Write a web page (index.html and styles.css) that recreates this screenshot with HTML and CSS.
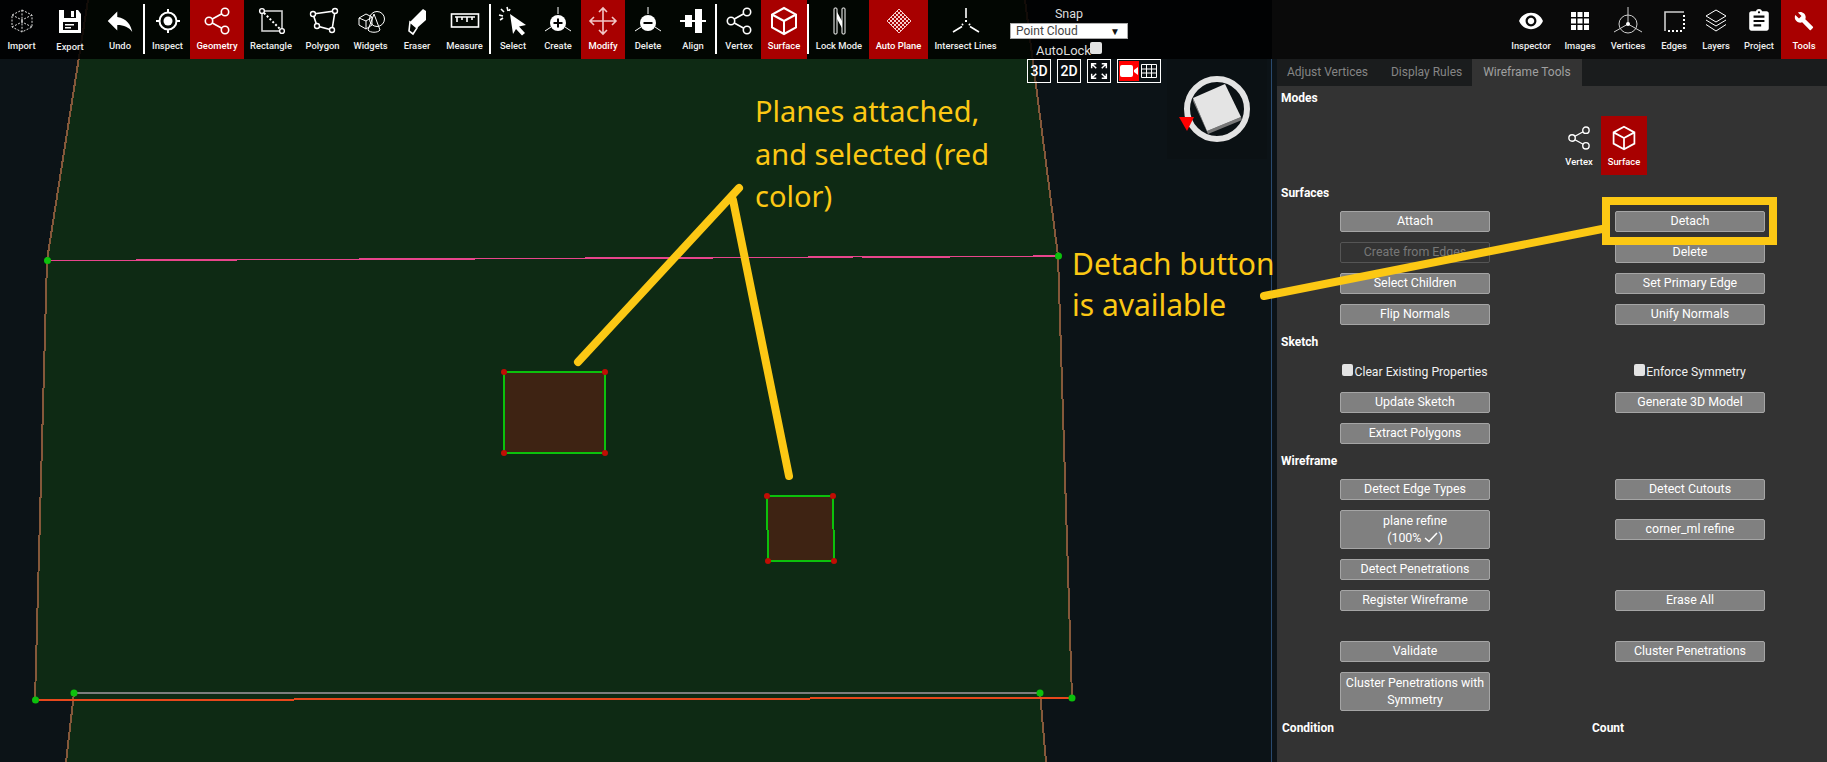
FILE: index.html
```html
<!DOCTYPE html>
<html lang="en">
<head>
<meta charset="utf-8">
<title>Wireframe Tools</title>
<link rel="stylesheet" href="styles.css">
</head>
<body>
<div class="app">
  <svg class="scene" viewBox="0 0 1827 762" aria-hidden="true">
    <polygon class="ground" points="88,0 47,260 35,700 73,700 66,762 1046,762 1041,698 1072,698 1058,256 1025,0"/>
    <polyline class="edge" points="88,0 47,260 35,700"/>
    <polyline class="edge" points="1025,0 1058,256 1072,698"/>
    <polyline class="edge" points="74,693 66,762"/>
    <polyline class="edge" points="1040,693 1046,762"/>
    <line class="pink" x1="47" y1="260.500" x2="1058" y2="256"/>
    <line class="pink-thick" x1="148" y1="260" x2="237" y2="260"/>
    <line class="pink-thick" x1="386" y1="259" x2="475" y2="259"/>
    <line class="pink-thick" x1="624" y1="258" x2="713" y2="258"/>
    <line class="pink-thick" x1="862" y1="257" x2="950" y2="257"/>
    <line class="grey" x1="74" y1="693" x2="1040" y2="693"/>
    <line class="orange" x1="36" y1="700" x2="1072" y2="698"/>
    <polygon class="plane" points="504,372 605,372 605,453 504,453"/>
    <polygon class="plane" points="767,496 833,496 834,561 768,561"/>
    <g class="red-dots">
      <circle cx="504" cy="372" r="3"/><circle cx="605" cy="372" r="3"/><circle cx="605" cy="453" r="3"/><circle cx="504" cy="453" r="3"/>
      <circle cx="767" cy="496" r="3"/><circle cx="833" cy="496" r="3"/><circle cx="834" cy="561" r="3"/><circle cx="768" cy="561" r="3"/>
    </g>
    <g class="green-dots">
      <circle cx="47.500" cy="260.500" r="3.500"/><circle cx="1058.500" cy="256" r="3.500"/><circle cx="35.500" cy="700" r="3.500"/>
      <circle cx="74" cy="693" r="3.500"/><circle cx="1040" cy="693" r="3.500"/><circle cx="1072" cy="698" r="3.500"/>
    </g>
  </svg>

  <header class="toolbar">
    <div class="tool-strip">
      <div class="tool"><svg class="ico" viewBox="0 0 30 30"><path class="dash" d="M15 4 25 9V21L15 26 5 21V9ZM5 9 15 14 25 9M15 14V26M5 21 15 16 25 21M15 4V16"/></svg><span>Import</span></div>
      <div class="tool"><svg class="ico" viewBox="0 0 30 30"><path class="fill" d="M4 4H23L26 8V27H4Z"/><rect class="cut" x="9" y="4" width="12" height="8"/><rect class="fill" x="16" y="5" width="3" height="6"/><rect class="cut" x="8" y="16" width="15" height="8"/><rect class="fill" x="10" y="18" width="9" height="1.500"/><rect class="fill" x="10" y="21" width="6" height="1.500"/></svg><span class="low">Export</span></div>
      <div class="tool"><svg class="ico" viewBox="1 1 22 22"><path class="fill" d="M10 9V5l-7 7 7 7v-4.100c5 0 8.500 1.600 11 5.100-1-5-4-10-11-11z"/></svg><span>Undo</span></div>
      <i class="sep"></i>
      <div class="tool"><svg class="ico" viewBox="0 0 30 30"><circle class="st2" cx="15" cy="15" r="8.500"/><circle class="fill" cx="15" cy="15" r="4.500"/><path class="st2" d="M15 3V7M15 23V27M3 15H7M23 15H27"/></svg><span>Inspect</span></div>
      <div class="tool on"><svg class="ico" viewBox="0 0 30 30"><path class="st15" d="M10.300 13 19.800 7.800M10.300 17 19.800 22.200"/><circle class="st15" cx="23" cy="6" r="3.700"/><circle class="st15" cx="7" cy="15" r="3.700"/><circle class="st15" cx="23" cy="24" r="3.700"/></svg><span>Geometry</span></div>
      <div class="tool"><svg class="ico" viewBox="0 0 30 30"><rect class="st15 soft" x="6" y="5" width="20" height="20"/><path class="dots" d="M8 7 24 23"/><circle class="node" cx="6" cy="5" r="2.400"/><circle class="node" cx="26" cy="25" r="2.400"/></svg><span>Rectangle</span></div>
      <div class="tool"><svg class="ico" viewBox="0 0 30 30"><path class="st15" d="M5 8 27 5 24 24 9 20Z"/><circle class="node" cx="5" cy="8" r="2.500"/><circle class="node" cx="27" cy="5" r="2.500"/><circle class="node" cx="24" cy="24" r="2.500"/><circle class="node" cx="9" cy="20" r="2.500"/></svg><span>Polygon</span></div>
      <div class="tool"><svg class="ico" viewBox="0 0 30 30"><circle class="st1" cx="21" cy="13" r="7.500"/><path class="st1" d="M18 8 12 24C14 27 22 27 24 24Z"/><path class="st1" d="M3 12 10 8 16 11V19L10 23 3 19ZM3 12 10 15 16 11M10 15V23"/></svg><span>Widgets</span></div>
      <div class="tool"><svg class="ico" viewBox="0 0 30 30"><path class="fill" d="M8 16 21 3 24 5V14L15 22Z"/><path class="st15" d="M8 16 15 22 11 28 7 25Z"/></svg><span>Eraser</span></div>
      <div class="tool"><svg class="ico" viewBox="0 0 30 30"><rect class="st15" x="1.500" y="8" width="27" height="13"/><path class="st15" d="M5 11H25M7 11V16M12 11V14M17 11V16M22 11V14"/></svg><span>Measure</span></div>
      <i class="sep"></i>
      <div class="tool"><svg class="ico" viewBox="0 0 30 30"><path class="fill" d="M12 8 28 19 21 20.500 27 27 24 29.500 18 23 15 28Z"/><path class="st15" d="M9 1 10 5M1 9 5 10M3 3 6 6M12 3 11 5M2 14 5 12"/></svg><span>Select</span></div>
      <div class="tool"><svg class="ico" viewBox="0 0 30 30"><path class="st1" d="M15 1V8M2 25 8 21M28 25 22 21"/><circle class="fill" cx="15" cy="17" r="8"/><path class="inv" d="M15 12.500V21.500M10.500 17H19.500"/></svg><span>Create</span></div>
      <div class="tool on"><svg class="ico" viewBox="0 0 30 30"><path class="st15 pale" d="M15 2V28M2 15H28M11 6 15 2 19 6M11 24 15 28 19 24M6 11 2 15 6 19M24 11 28 15 24 19"/></svg><span>Modify</span></div>
      <div class="tool"><svg class="ico" viewBox="0 0 30 30"><path class="st1" d="M15 1V8M2 25 8 21M28 25 22 21"/><circle class="fill" cx="15" cy="17" r="8"/><path class="inv" d="M10.500 17H19.500"/></svg><span>Delete</span></div>
      <div class="tool"><svg class="ico" viewBox="0 0 30 30"><path class="st2" d="M2 15H28"/><rect class="fill" x="7" y="9" width="7" height="12"/><rect class="fill" x="17" y="3" width="7" height="24"/></svg><span>Align</span></div>
      <i class="sep"></i>
      <div class="tool"><svg class="ico" viewBox="0 0 30 30"><path class="st15" d="M10.300 13 19.800 7.800M10.300 17 19.800 22.200"/><circle class="st15" cx="23" cy="6" r="3.700"/><circle class="st15" cx="7" cy="15" r="3.700"/><circle class="st15" cx="23" cy="24" r="3.700"/></svg><span>Vertex</span></div>
      <div class="tool on"><svg class="ico" viewBox="0 0 30 30"><path class="st2" d="M15 2 27 8.500V21.500L15 28 3 21.500V8.500ZM3 8.500 15 15 27 8.500M15 15V28"/></svg><span>Surface</span></div>
      <i class="sep"></i>
      <div class="tool"><svg class="ico" viewBox="0 0 30 30"><rect class="st1" x="10" y="2" width="3" height="26" rx="1"/><rect class="st1" x="18" y="2" width="3" height="26" rx="1"/><path class="fill" d="M13 6 18 15V22L13 13Z"/></svg><span>Lock Mode</span></div>
      <div class="tool on"><svg class="ico" viewBox="0 0 30 30"><path class="mesh" d="M15 3 27 15 15 27 3 15ZM11 7 23 19M7 11 19 23M19 7 7 19M23 11 11 23M13 5 25 17M9 9 21 21M5 13 17 25M17 5 5 17M21 9 9 21M25 13 13 25"/></svg><span>Auto Plane</span></div>
      <div class="tool"><svg class="ico" viewBox="0 0 30 30"><path class="st15" d="M15 2V12M2 26 11 20.500M28 26 19 20.500"/><path class="dots" d="M15 14V18M12 18 11 19M18 18 19 19"/></svg><span>Intersect Lines</span></div>
    </div>
    <div class="snap">
      <div class="snap-title">Snap</div>
      <div class="select"><span>Point Cloud</span><b>▼</b></div>
      <label class="autolock">AutoLock<input type="checkbox"></label>
    </div>
    <div class="toolbar-right">
      <div class="tool"><svg class="ico" viewBox="-1.800 -1.800 27.600 27.600"><path class="fill" d="M12 4.500C7 4.500 2.730 7.610 1 12c1.730 4.390 6 7.500 11 7.500s9.270-3.110 11-7.500c-1.730-4.390-6-7.500-11-7.500zM12 17c-2.760 0-5-2.240-5-5s2.240-5 5-5 5 2.240 5 5-2.240 5-5 5zm0-8c-1.660 0-3 1.340-3 3s1.340 3 3 3 3-1.340 3-3-1.340-3-3-3z"/></svg><span>Inspector</span></div>
      <div class="tool"><svg class="ico" viewBox="0 0 30 30"><path class="fill" d="M6 6h5v5H6zM12.500 6h5v5h-5zM19 6h5v5h-5zM6 12.500h5v5H6zM12.500 12.500h5v5h-5zM19 12.500h5v5h-5zM6 19h5v5H6zM12.500 19h5v5h-5zM19 19h5v5h-5z"/></svg><span>Images</span></div>
      <div class="tool"><svg class="ico" viewBox="0 0 30 30"><circle class="st1 soft" cx="15" cy="18" r="9"/><path class="st1 soft" d="M15 1V18L1 26M15 18 29 26"/><circle class="fill" cx="15" cy="18" r="2"/></svg><span>Vertices</span></div>
      <div class="tool"><svg class="ico" viewBox="0 0 30 30"><path class="st15 soft" d="M6 25V6H25"/><path class="dots" d="M25 9V25M9 25H25"/></svg><span>Edges</span></div>
      <div class="tool"><svg class="ico" viewBox="0 0 30 30"><path class="st1" d="M15 4 25 10 15 16 5 10ZM5 14 15 20 25 14M5 18.500 15 25 25 18.500"/></svg><span>Layers</span></div>
      <div class="tool"><svg class="ico" viewBox="-1.800 -1.800 27.600 27.600"><path class="fill" d="M19 3h-4.180C14.400 1.840 13.300 1 12 1c-1.300 0-2.400.84-2.820 2H5c-1.100 0-2 .9-2 2v14c0 1.100.9 2 2 2h14c1.100 0 2-.9 2-2V5c0-1.100-.9-2-2-2zm-7 0c.55 0 1 .45 1 1s-.45 1-1 1-1-.45-1-1 .45-1 1-1zm2 14H7v-2h7v2zm3-4H7v-2h10v2zm0-4H7V7h10v2z"/></svg><span>Project</span></div>
      <div class="tool on"><svg class="ico" viewBox="-6 -6 36 36"><path class="fill" d="M22.700 19l-9.100-9.100c.9-2.300.4-5-1.500-6.900-2-2-5-2.400-7.400-1.300L9 6 6 9 1.600 4.700C.4 7.100.9 10.100 2.900 12.100c1.900 1.900 4.600 2.400 6.900 1.500l9.100 9.100c.4.4 1 .4 1.400 0l2.300-2.300c.5-.4.5-1.100.1-1.400z"/></svg><span>Tools</span></div>
    </div>
  </header>

  <div class="workspace">
    <div class="viewport">
      <div class="view-btn">3D</div>
      <div class="view-btn">2D</div>
      <div class="view-btn"><svg viewBox="0 0 24 24" class="view-ico"><path class="st15" d="M4 9V4H9M4 4 9 9M15 4H20V9M20 4 15 9M4 15V20H9M4 20 9 15M20 15V20H15M20 20 15 15"/></svg></div>
      <div class="view-pair">
        <span class="cam"><svg viewBox="0 0 20 20"><rect class="fill" x="1" y="4" width="13" height="12" rx="2"/><path class="fill" d="M15 9 19 6V14L15 11Z"/></svg></span>
        <span class="grid-ico"><svg viewBox="0 0 20 20"><path class="st1" d="M2.500 3.500H17.500V16.500H2.500ZM7.500 3.500V16.500M12.500 3.500V16.500M2.500 8H17.500M2.500 12H17.500"/></svg></span>
      </div>
      <div class="gizmo">
        <svg viewBox="0 0 100 100">
          <circle class="ring" cx="50" cy="50" r="30"/>
          <polygon class="cube-side" points="26,39 40,72 74,58 75,61 41,75 26,42"/>
          <polygon class="cube-top" points="26,39 58,25 74,58 40,72"/>
          <polygon class="cube-arrow" points="12,58 27,58 20,72"/>
        </svg>
      </div>
    </div>

    <aside class="panel">
      <nav class="tabs">
        <div class="tab">Adjust Vertices</div>
        <div class="tab">Display Rules</div>
        <div class="tab active">Wireframe Tools</div>
      </nav>
      <div class="panel-body">
        <h3 class="section">Modes</h3>
        <div class="modes">
          <div class="mode"><svg class="mode-ico" viewBox="0 0 30 30"><path class="st15" d="M10.300 13 19.800 7.800M10.300 17 19.800 22.200"/><circle class="st15" cx="23" cy="6" r="3.700"/><circle class="st15" cx="7" cy="15" r="3.700"/><circle class="st15" cx="23" cy="24" r="3.700"/></svg><span>Vertex</span></div>
          <div class="mode on"><svg class="mode-ico" viewBox="0 0 30 30"><path class="st2" d="M15 2 27 8.500V21.500L15 28 3 21.500V8.500ZM3 8.500 15 15 27 8.500M15 15V28"/></svg><span>Surface</span></div>
        </div>

        <h3 class="section gap-s">Surfaces</h3>
        <div class="actions">
          <button>Attach</button><button>Detach</button>
          <button class="disabled">Create from Edges</button><button>Delete</button>
          <button>Select Children</button><button>Set Primary Edge</button>
          <button>Flip Normals</button><button>Unify Normals</button>
        </div>

        <h3 class="section gap-k">Sketch</h3>
        <div class="actions tight">
          <label class="check"><input type="checkbox"><span>Clear Existing Properties</span></label>
          <label class="check"><input type="checkbox"><span>Enforce Symmetry</span></label>
          <button>Update Sketch</button><button>Generate 3D Model</button>
          <button>Extract Polygons</button><span></span>
        </div>

        <h3 class="section gap-w">Wireframe</h3>
        <div class="actions">
          <button>Detect Edge Types</button><button>Detect Cutouts</button>
          <button class="tall">plane refine<br>(100% <svg class="tick" viewBox="0 0 14 11"><path d="M1 6 5 9.500 13 1"/></svg>)</button><button>corner_ml refine</button>
          <button>Detect Penetrations</button><span></span>
          <button>Register Wireframe</button><button>Erase All</button>
          <i class="spacer"></i><i class="spacer"></i>
          <button>Validate</button><button>Cluster Penetrations</button>
          <button class="tall">Cluster Penetrations with Symmetry</button><span></span>
        </div>

        <div class="counts">
          <h3 class="section">Condition</h3>
          <h3 class="section">Count</h3>
        </div>
      </div>
    </aside>
  </div>

  <svg class="callouts" viewBox="0 0 1827 762" aria-hidden="true">
    <path d="M578 362 739 188M733 200 789 476M1264 296 1602 229"/>
    <rect x="1606" y="201" width="167" height="40"/>
  </svg>
  <p class="note note-planes">Planes attached,<br>and selected (red<br>color)</p>
  <p class="note note-detach">Detach button<br>is available</p>
</div>
</body>
</html>
```
FILE: styles.css
```css
* { box-sizing: border-box; }
html, body { margin: 0; height: 100%; background: #0c1317; }
body { font-family: Roboto, "Liberation Sans", sans-serif; color: #fff; overflow: hidden; }

.app { position: relative; width: 1827px; height: 762px; overflow: hidden; display: flex; flex-direction: column; }

/* 3D scene canvas */
.scene { position: absolute; inset: 0; width: 1827px; height: 762px; }
.ground { fill: #0e2a14; }
.edge { fill: none; stroke: #85583a; stroke-width: 2; shape-rendering: crispEdges; }
.pink { stroke: #e8458c; stroke-width: 1.2; shape-rendering: crispEdges; }
.pink-thick { stroke: #e8458c; stroke-width: 2; shape-rendering: crispEdges; }
.grey { stroke: #7d7d7d; stroke-width: 2; shape-rendering: crispEdges; }
.orange { stroke: #e8481c; stroke-width: 2; shape-rendering: crispEdges; }
.plane { fill: #3e2313; stroke: #0cc00c; stroke-width: 2; shape-rendering: crispEdges; }
.red-dots circle { fill: #c00d04; }
.green-dots circle { fill: #0cc00c; }

/* toolbar */
.toolbar { position: relative; z-index: 2; height: 59px; display: flex; flex: none; background: rgba(0, 0, 0, .86); }
.tool-strip { flex: none; display: grid; grid-template-columns: 43px 54px 46px 2px 45px 54px 54px 49px 47px 46px 49px 2px 44px 46px 44px 46px 44px 2px 44px 46px 2px 60px 59px 75px; }
.tool { min-width: 0; height: 59px; padding-top: 6px; display: flex; flex-direction: column; align-items: center; font-size: 9.4px; font-weight: 500; line-height: 12px; color: #eee; white-space: nowrap; }
.tool.on { background: #a80000; color: #fff; }
.low { margin-top: 1px; }
.ico { width: 30px; height: 30px; margin-bottom: 4px; flex: none; overflow: visible; }
.sep { width: 2px; height: 50px; margin-top: 4px; background: #fff; }
.toolbar-right { margin-left: auto; width: 555px; display: grid; grid-template-columns: 52px 46px 50px 42px 42px 44px 46px; justify-content: end; background: #0a0a0a; }

.fill { fill: #fff; }
.cut { fill: #060606; }
.st1, .st15, .st2, .dash, .dots, .inv, .mesh { fill: none; stroke: #fff; }
.st1 { stroke-width: 1; }
.st15 { stroke-width: 1.6; }
.st2 { stroke-width: 2; }
.soft { stroke: #cfcfcf; }
.pale { stroke: #f2c6c6; }
.dash { stroke-width: 1; stroke-dasharray: 2 1.4; stroke: #ddd; }
.dots { stroke-width: 2; stroke-dasharray: 2 2; }
.inv { stroke: #000; stroke-width: 2; }
.mesh { stroke-width: 1; stroke: #f6cccc; }
.node { fill: #060606; stroke: #fff; stroke-width: 1.4; }

.snap { flex: none; width: 118px; margin-left: 7px; padding-top: 6px; display: flex; flex-direction: column; align-items: center; font-size: 13px; color: #ddd; }
.snap-title { line-height: 16px; font-size: 12.5px; }
.select { width: 118px; height: 18px; margin-top: 1px; padding: 0 7px 0 5px; display: flex; align-items: center; justify-content: space-between; background: #fff; border: 1px solid #aaa; color: #444; font-size: 12px; }
.select b { font-size: 10px; color: #111; font-weight: 400; }
.autolock { margin-top: 4px; height: 16px; line-height: 16px; display: flex; align-items: flex-start; }
.autolock input { appearance: none; width: 12px; height: 12px; margin: -1px 0 0 -1px; background: #e3e3e3; border-radius: 2px; }

/* workspace */
.workspace { position: relative; flex: 1; display: flex; min-height: 0; }
.viewport { width: 1271px; flex: none; padding-right: 4px; display: flex; justify-content: flex-end; align-items: flex-start; gap: 6px; }
.view-btn { width: 24px; height: 24px; border: 1px solid #fff; background: rgba(0, 0, 0, .3); display: flex; align-items: center; justify-content: center; font-size: 14px; font-weight: 500; }
.view-ico { width: 22px; height: 22px; }
.view-pair { width: 44px; height: 24px; border: 1px solid #fff; padding: 1px; display: flex; }
.cam { width: 20px; background: #f00; display: flex; align-items: center; }
.grid-ico { flex: 1; display: flex; align-items: center; }
.cam svg, .grid-ico svg { width: 20px; height: 20px; }
.gizmo { width: 100px; height: 100px; background: #0b1114; }
.gizmo svg { width: 100px; height: 100px; display: block; }
.ring { fill: none; stroke: #e3e3e3; stroke-width: 6; }
.cube-top { fill: #e4e4e4; }
.cube-side { fill: #777; }
.cube-arrow { fill: #f00; }

/* panel */
.panel { flex: 1; padding-left: 5px; border-left: 1px solid #2a4a6e; display: flex; flex-direction: column; min-width: 0; }
.tabs { display: flex; height: 27px; flex: none; background: #1a1c1d; font-size: 12px; line-height: 27px; color: #858585; }
.tab { padding: 0 11.5px; white-space: nowrap; }
.tab:first-child { padding-left: 10px; }
.tab:nth-child(2) { padding-right: 9.5px; }
.tab.active { background: #333; color: #a0a0a0; }
.panel-body { flex: 1; background: #333; padding-top: 4px; }
.section { margin: 0; padding-left: 4px; font-size: 12px; font-weight: 700; line-height: 16px; color: #fff; }
.gap-s { margin-top: 10px; }
.gap-k { margin-top: 9px; }
.gap-w { margin-top: 9px; }

.modes { margin: 10px 0 0 280px; height: 59px; display: flex; }
.mode { width: 44px; height: 59px; padding-top: 9px; display: flex; flex-direction: column; align-items: center; font-size: 9.4px; font-weight: 500; }
.mode.on { width: 46px; background: #a80000; }
.mode-ico { width: 26px; height: 26px; margin-bottom: 5px; overflow: visible; }

.actions { margin-top: 10px; padding-left: 63px; display: grid; grid-template-columns: 150px 150px; column-gap: 125px; row-gap: 10px; align-items: center; }
.actions.tight { margin-top: 12px; }
button { height: 21px; padding: 0 0 2px; border: 1px solid #a5a5a5; border-radius: 2px; background: #808080; color: #fff; font: 400 12.4px/17px Roboto, "Liberation Sans", sans-serif; text-align: center; }
button.tall { height: 39px; }
button.disabled { background: transparent; border-color: #555; color: #777; }
.tick { width: 14px; height: 11px; vertical-align: -1px; fill: none; stroke: #fff; stroke-width: 1.5; }
.spacer { height: 10px; }
.check { display: flex; justify-content: center; height: 20px; font-size: 12.2px; line-height: 20px; color: #f0f0f0; white-space: nowrap; }
.check input { appearance: none; flex: none; width: 11px; height: 12px; margin: 2px 1px 0 0; background: #e3e3e3; border-radius: 2px; }

.counts { margin-top: 9px; padding-left: 1px; display: grid; grid-template-columns: 310px 1fr; }

/* annotations laid over the screenshot */
.callouts { position: absolute; inset: 0; z-index: 3; width: 1827px; height: 762px; pointer-events: none; fill: none; stroke: #fcc814; stroke-width: 8; stroke-linecap: round; }
.note { position: absolute; z-index: 4; margin: 0; font-family: "Noto Sans", "Open Sans", sans-serif; line-height: 42.5px; color: #fcc814; white-space: nowrap; }
.note-planes { left: 755px; top: 90px; font-size: 29px; }
.note-detach { left: 1072px; top: 243px; font-size: 30px; line-height: 41px; }
```
